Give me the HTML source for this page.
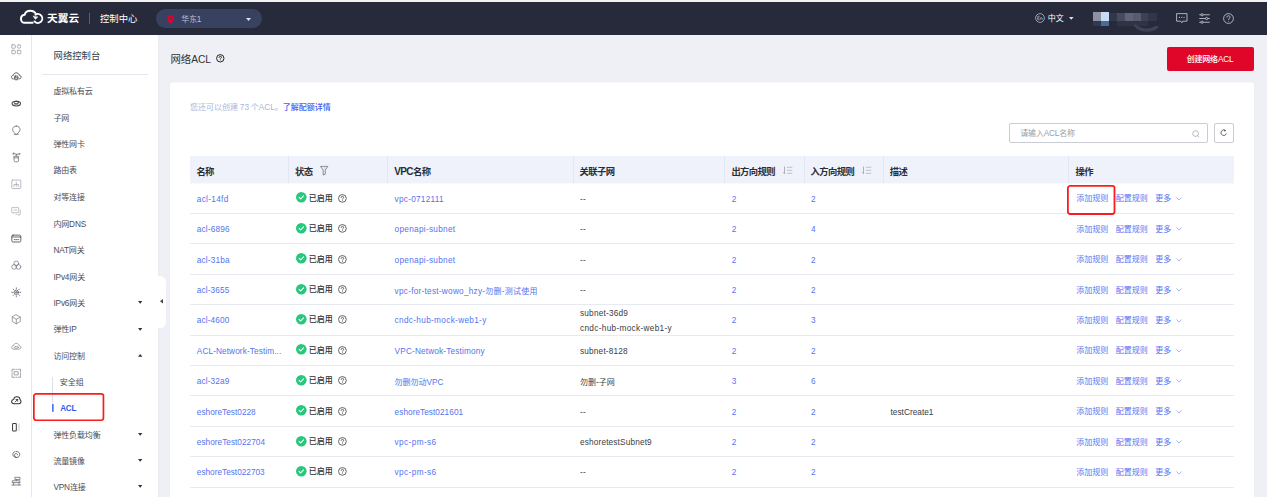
<!DOCTYPE html>
<html lang="zh"><head><meta charset="utf-8"><title>网络ACL</title>
<style>
html,body{margin:0;padding:0}
body{width:1267px;height:497px;overflow:hidden;position:relative;background:#eff0f5;font-family:"Liberation Sans","Noto Sans CJK SC",sans-serif}
body>div,body>svg{position:absolute}
svg{overflow:visible}
.cj{font-family:"Liberation Sans","Noto Sans CJK SC",sans-serif}
.cb{font-weight:bold}
.cm{font-weight:500}
</style></head><body>
<div style="left:0.00px;top:0.00px;width:1267.00px;height:2.00px;background:#f2f2f3"></div>
<div style="left:0.00px;top:2.00px;width:1267.00px;height:32.70px;background:#272a3a"></div>
<svg style="left:0;top:0;width:100px;height:35px" viewBox="0 0 100 35" fill="none" stroke="#fff" stroke-width="2" stroke-linecap="round" stroke-linejoin="round">
<path d="M32.6 22.8H24.6C22.4 22.8 21 21 21 18.9C21 16.700 22.500 15 24.700 14.800C25.200 12.400 27.400 10.800 30.200 10.800C32.900 10.800 35 12.100 36 14.100"/>
<path d="M35.500 14.600A4.500 4.500 0 1 1 34.400 21.400" stroke-width="1.9"/>
<path d="M33.300 16.300L35.300 19.300L37.600 17.200Z" fill="#fff" stroke-width="0.6"/>
</svg>
<div style="left:47.00px;top:11.25px;height:14px;line-height:14px;font-size:10.70px;color:#fff;white-space:nowrap;"><span class="cj cb">天翼云</span></div>
<div style="left:89.00px;top:13.20px;width:0.90px;height:10.70px;background:#5a5e70"></div>
<div style="left:100.00px;top:12.45px;height:14px;line-height:14px;font-size:9.33px;color:#fff;white-space:nowrap;"><span class="cj">控制中心</span></div>
<div style="left:156.40px;top:8.70px;width:105.60px;height:19.50px;background:#384260;border-radius:10px"></div>
<svg style="left:166.8px;top:14.6px;width:7px;height:8.8px" viewBox="0 0 14 17.6"><path d="M7 0.3C3.3 0.3 0.5 3.1 0.5 6.7C0.5 10.6 4.2 14.2 7 17.3C9.8 14.2 13.5 10.6 13.5 6.7C13.5 3.1 10.7 0.3 7 0.3Z" fill="#e60028"/><circle cx="7" cy="6.6" r="2.5" fill="#384260"/></svg>
<div style="left:181.30px;top:13.25px;height:14px;line-height:14px;font-size:7.90px;color:#b9bfd2;white-space:nowrap;"><span class="cj">华东</span><span style="margin-left:-0.4px;font-size:8.25px">1</span></div>
<svg style="left:245.8px;top:17.6px;width:5px;height:3px" viewBox="0 0 10 6"><path d="M0 0H10L5 6Z" fill="#dfe2ee"/></svg>
<svg style="left:1035px;top:13.2px;width:10px;height:10px" viewBox="0 0 20 20" fill="none" stroke="#c9ccd8" stroke-width="1.4"><circle cx="10" cy="10" r="8.8"/><path d="M5.5 6.5H9.5M5.5 10H9M5.5 13.5H9.5M5.5 6.5V13.5M11.5 13.5V9M11.5 10.5C12 9.3 14.5 8.8 14.5 10.8V13.5" stroke-width="1.2"/></svg>
<div style="left:1047.70px;top:11.56px;height:14px;line-height:14px;font-size:8.00px;color:#fff;white-space:nowrap;"><span class="cj">中文</span></div>
<svg style="left:1068.6px;top:16.6px;width:4.6px;height:2.8px" viewBox="0 0 10 6"><path d="M0 0H10L5 6Z" fill="#dfe2ee"/></svg>
<div style="left:1093.00px;top:12.00px;width:8.50px;height:9.50px;background:#8d91a1"></div>
<div style="left:1101.00px;top:12.00px;width:8.00px;height:9.50px;background:#c6dbf4"></div>
<div style="left:1093.00px;top:21.40px;width:8.50px;height:4.60px;background:#2e3a53"></div>
<div style="left:1101.00px;top:21.40px;width:8.00px;height:4.60px;background:#4c6b94"></div>
<div style="left:1108.70px;top:12.70px;width:9.30px;height:8.10px;background:#33374a"></div>
<div style="left:1117.00px;top:12.70px;width:8.80px;height:8.10px;background:#484b5e"></div>
<div style="left:1124.80px;top:12.70px;width:8.80px;height:8.10px;background:#626579"></div>
<div style="left:1132.60px;top:12.70px;width:8.90px;height:8.10px;background:#595c6f"></div>
<div style="left:1140.50px;top:12.70px;width:8.80px;height:8.10px;background:#3e4153"></div>
<div style="left:1148.30px;top:12.70px;width:8.70px;height:8.10px;background:#33364a"></div>
<div style="left:1117.00px;top:20.80px;width:31.00px;height:5.60px;background:#2f3345"></div>
<svg style="left:1130px;top:24px;width:32px;height:9px" viewBox="0 0 32 9"><path d="M5 1.500C9 5.500 18 8 27 3C23 7 11 8.500 5 1.500Z" fill="#3f4255" stroke="#3f4255" stroke-width="2.600" stroke-linejoin="round"/></svg>
<svg style="left:1175.6px;top:12.8px;width:11.6px;height:10.8px" viewBox="0 0 23 21.4" fill="none" stroke="#d9dbe4" stroke-width="1.5"><path d="M1.2 1.2H21.8V16.2H13.5L11.5 19.5L9.5 16.2H1.2Z" stroke-linejoin="round"/><path d="M6 8.7H8M10.5 8.7H12.5M15 8.7H17" stroke-width="1.8"/></svg>
<svg style="left:1199.4px;top:13px;width:11px;height:11px" viewBox="0 0 22 22" fill="none" stroke="#d9dbe4" stroke-width="1.5"><path d="M0.5 3.5H4M8.5 3.5H21.5M0.5 11H13M17.5 11H21.5M0.5 18.5H4M8.5 18.5H21.5"/><circle cx="6.2" cy="3.5" r="2.2"/><circle cx="15.2" cy="11" r="2.2"/><circle cx="6.2" cy="18.5" r="2.2"/></svg>
<svg style="left:1223.2px;top:13.1px;width:11px;height:11px" viewBox="0 0 22 22" fill="none" stroke="#d9dbe4" stroke-width="1.5"><circle cx="11" cy="11" r="9.8"/><path d="M7.8 8.6C7.8 6.6 9.2 5.5 11 5.5C12.9 5.5 14.2 6.7 14.2 8.3C14.2 10.6 11 10.6 11 13.2" stroke-linecap="round"/><circle cx="11" cy="16.3" r="0.9" fill="#d9dbe4" stroke="none"/></svg>
<div style="left:0.00px;top:34.70px;width:31.30px;height:462.30px;background:#fff;border-right:0.8px solid #e3e6f0"></div>
<div style="left:32.00px;top:34.70px;width:126.20px;height:462.30px;background:#fff"></div>
<div style="left:158.20px;top:34.70px;width:3.00px;height:462.30px;background:linear-gradient(90deg,#e9ebf1,#f0f1f6)"></div>
<div style="left:158.00px;top:275.50px;width:7.80px;height:52.50px;background:#fff;border-radius:0 6px 6px 0"></div>
<svg style="left:160.2px;top:299px;width:3px;height:4.6px" viewBox="0 0 6 9"><path d="M6 0V9L0 4.5Z" fill="#444"/></svg>
<svg style="left:10.9px;top:43.60px;width:10.6px;height:10.6px" viewBox="0 0 20 20" fill="none" stroke="#9a9da8" stroke-width="1.5" stroke-linejoin="round" stroke-linecap="round"><rect x="1.5" y="1.5" width="6.5" height="6.5" rx="0.8"/><rect x="12" y="1.5" width="6.5" height="6.5" rx="3"/><rect x="1.5" y="12" width="6.5" height="6.5" rx="0.8"/><rect x="12" y="12" width="6.5" height="6.5" rx="0.8"/></svg>
<svg style="left:10.9px;top:70.65px;width:10.6px;height:10.6px" viewBox="0 0 20 20" fill="none" stroke="#33363f" stroke-width="1.5" stroke-linejoin="round" stroke-linecap="round"><path d="M4.5 15H3.5C1.5 14.5 0.8 12.5 1 11C1.3 9 3 8 4.5 8C5 5 7.5 3.5 10 3.5C12.5 3.5 15 5 15.5 8C17.5 8 19 9.5 19 11.5C19 13.5 17.5 15 15.5 15"/><rect x="7" y="9.5" width="6" height="7" rx="1"/><path d="M7 13H13"/></svg>
<svg style="left:10.9px;top:97.70px;width:10.6px;height:10.6px" viewBox="0 0 20 20" fill="none" stroke="#3d4049" stroke-width="1.5" stroke-linejoin="round" stroke-linecap="round"><ellipse cx="10" cy="10.5" rx="8" ry="4.4" stroke-width="1.9"/><ellipse cx="10" cy="8.6" rx="4" ry="2.8"/><path d="M6.5 11.2H13.5"/></svg>
<svg style="left:10.9px;top:124.75px;width:10.6px;height:10.6px" viewBox="0 0 20 20" fill="none" stroke="#6a6d78" stroke-width="1.5" stroke-linejoin="round" stroke-linecap="round"><path d="M10 2C14.5 2 17 5.2 17 8.5C17 12.5 14 14.5 10 18C6 14.5 3 12.5 3 8.5C3 5.2 5.5 2 10 2Z"/><path d="M6 17.5H14"/></svg>
<svg style="left:10.9px;top:151.80px;width:10.6px;height:10.6px" viewBox="0 0 20 20" fill="none" stroke="#6f727b" stroke-width="1.5" stroke-linejoin="round" stroke-linecap="round"><path d="M6 8H14V17C14 18 13 18.5 12 18.5H8C7 18.5 6 18 6 17Z"/><path d="M6 11H14M10 8V4.5M10 4.5L5 2M10 4.5L15 3.5M3.5 3L5 2L4.5 4.5M15 3.5L17 2.5L16.5 5"/></svg>
<svg style="left:10.9px;top:178.85px;width:10.6px;height:10.6px" viewBox="0 0 20 20" fill="none" stroke="#a9acb6" stroke-width="1.5" stroke-linejoin="round" stroke-linecap="round"><rect x="1.5" y="2" width="17" height="16" rx="1.5"/><path d="M10 6V14M5.5 14V10.5H14.5V14"/></svg>
<svg style="left:10.9px;top:205.90px;width:10.6px;height:10.6px" viewBox="0 0 20 20" fill="none" stroke="#b3b6bf" stroke-width="1.5" stroke-linejoin="round" stroke-linecap="round"><path d="M2 3H14.5V12H7L4.5 14.5V12H2Z"/><path d="M17.5 7.5V15.5H15.5V18L12.5 15.5H9"/><path d="M5.5 7.5H11"/></svg>
<svg style="left:10.9px;top:232.95px;width:10.6px;height:10.6px" viewBox="0 0 20 20" fill="none" stroke="#3d4049" stroke-width="1.5" stroke-linejoin="round" stroke-linecap="round"><rect x="1.5" y="4" width="17" height="13" rx="2.5"/><path d="M1.5 7.5H18.5"/><path d="M6 12.5H7.5M9.5 12.5H11M13 12.5H14.5"/></svg>
<svg style="left:10.9px;top:260.00px;width:10.6px;height:10.6px" viewBox="0 0 20 20" fill="none" stroke="#80838d" stroke-width="1.5" stroke-linejoin="round" stroke-linecap="round"><circle cx="10" cy="6.5" r="4.5"/><circle cx="6" cy="13" r="4.5"/><circle cx="14" cy="13" r="4.5"/></svg>
<svg style="left:10.9px;top:287.05px;width:10.6px;height:10.6px" viewBox="0 0 20 20" fill="none" stroke="#5a5d68" stroke-width="1.5" stroke-linejoin="round" stroke-linecap="round"><circle cx="10" cy="10" r="4.2"/><circle cx="10" cy="10" r="1.6"/><path d="M10 1.5V3.5M10 16.5V18.5M1.5 10H3.5M16.5 10H18.5M4 4L5.3 5.3M14.7 14.7L16 16M4 16L5.3 14.7M14.7 5.3L16 4"/></svg>
<svg style="left:10.9px;top:314.10px;width:10.6px;height:10.6px" viewBox="0 0 20 20" fill="none" stroke="#85888f" stroke-width="1.5" stroke-linejoin="round" stroke-linecap="round"><path d="M10 1.5L17.5 5.8V14.2L10 18.5L2.5 14.2V5.8Z"/><path d="M2.5 5.8L10 10L17.5 5.8M10 10V18.5"/></svg>
<svg style="left:10.9px;top:341.15px;width:10.6px;height:10.6px" viewBox="0 0 20 20" fill="none" stroke="#8a8d97" stroke-width="1.5" stroke-linejoin="round" stroke-linecap="round"><path d="M5 15.5C2.5 15.5 1.2 13.8 1.2 12C1.2 10 2.8 8.7 4.8 8.7C5.3 6 7.5 4.5 10 4.5C12.5 4.5 14.7 6 15.2 8.7C17.2 8.7 18.8 10 18.8 12C18.8 13.8 17.5 15.5 15 15.5Z"/><ellipse cx="10" cy="12" rx="4" ry="1.8"/></svg>
<svg style="left:10.9px;top:368.20px;width:10.6px;height:10.6px" viewBox="0 0 20 20" fill="none" stroke="#8a8d97" stroke-width="1.5" stroke-linejoin="round" stroke-linecap="round"><path d="M2 7V2.5H7M9.5 2.5H11M13.5 2.5H18V7M18 9.5V11M18 13V17.5H13.5M11 17.5H9.5M7 17.5H2V13M2 11V9.5"/><rect x="6.5" y="7" width="7" height="6"/></svg>
<svg style="left:10.9px;top:395.25px;width:10.6px;height:10.6px" viewBox="0 0 20 20" fill="none" stroke="#2f323a" stroke-width="1.5" stroke-linejoin="round" stroke-linecap="round"><path d="M5.5 16.5C3 16.5 1.2 14.6 1.2 12.4C1.2 10.2 2.9 8.6 5 8.5C5.6 5.5 8 3.5 11 3.5C14.5 3.5 17 6 17.2 9C18.3 9.6 18.8 10.8 18.8 12.3C18.8 14.6 17 16.5 14.5 16.5Z" stroke-width="1.9"/><path d="M8 13L12.5 8.5M12.5 8.5V11.5M12.5 8.5H9.5" stroke-width="1.6"/></svg>
<svg style="left:10.9px;top:422.30px;width:10.6px;height:10.6px" viewBox="0 0 20 20" fill="none" stroke="#3a3d46" stroke-width="1.5" stroke-linejoin="round" stroke-linecap="round"><rect x="3" y="3" width="7" height="14" rx="1.5" stroke-width="1.9"/><path d="M15 4V16" stroke="#bbb"/></svg>
<svg style="left:10.9px;top:449.35px;width:10.6px;height:10.6px" viewBox="0 0 20 20" fill="none" stroke="#4a4d57" stroke-width="1.5" stroke-linejoin="round" stroke-linecap="round"><path d="M10 4.5C13.5 4.5 16.5 7 16.5 10.5C16.5 13.5 14 16 11 16C8.5 16 6.5 14 6.5 11.8C6.5 10 8 8.6 9.8 8.6C11.3 8.6 12.4 9.7 12.4 11"/><path d="M10 16C6.5 16 3.5 13.5 3.5 10C3.5 7.5 5 5.5 7.5 4.8"/></svg>
<svg style="left:10.9px;top:476.40px;width:10.6px;height:10.6px" viewBox="0 0 20 20" fill="none" stroke="#6a6d77" stroke-width="1.5" stroke-linejoin="round" stroke-linecap="round"><rect x="8" y="2.500" width="9" height="4"/><rect x="3" y="9" width="14" height="3.500"/><path d="M1.500 17H18.500M5 12.500V17M15 12.500V17M10 6.500V9"/></svg>
<div style="left:53.60px;top:49.25px;height:14px;line-height:14px;font-size:9.33px;color:#3a3d44;white-space:nowrap;"><span class="cj">网络控制台</span></div>
<div style="left:42.40px;top:74.00px;width:105.60px;height:0.80px;background:#e4e6ee"></div>
<div style="left:53.40px;top:85.36px;height:14px;line-height:14px;font-size:8.00px;color:#4a4d55;white-space:nowrap;letter-spacing:-0.15px"><span class="cj">虚拟私有云</span></div>
<div style="left:53.40px;top:111.76px;height:14px;line-height:14px;font-size:8.00px;color:#4a4d55;white-space:nowrap;letter-spacing:-0.15px"><span class="cj">子网</span></div>
<div style="left:53.40px;top:138.36px;height:14px;line-height:14px;font-size:8.00px;color:#4a4d55;white-space:nowrap;letter-spacing:-0.15px"><span class="cj">弹性网卡</span></div>
<div style="left:53.40px;top:164.26px;height:14px;line-height:14px;font-size:8.00px;color:#4a4d55;white-space:nowrap;letter-spacing:-0.15px"><span class="cj">路由表</span></div>
<div style="left:53.40px;top:191.26px;height:14px;line-height:14px;font-size:8.00px;color:#4a4d55;white-space:nowrap;letter-spacing:-0.15px"><span class="cj">对等连接</span></div>
<div style="left:53.40px;top:217.76px;height:14px;line-height:14px;font-size:8.00px;color:#4a4d55;white-space:nowrap;letter-spacing:-0.15px"><span class="cj">内网</span><span style="font-size:8.25px">DNS</span></div>
<div style="left:53.40px;top:244.16px;height:14px;line-height:14px;font-size:8.00px;color:#4a4d55;white-space:nowrap;letter-spacing:-0.15px"><span style="font-size:8.25px">NAT</span><span class="cj">网关</span></div>
<div style="left:53.40px;top:270.66px;height:14px;line-height:14px;font-size:8.00px;color:#4a4d55;white-space:nowrap;letter-spacing:-0.15px"><span style="font-size:8.25px">IPv4</span><span class="cj">网关</span></div>
<div style="left:53.40px;top:297.06px;height:14px;line-height:14px;font-size:8.00px;color:#4a4d55;white-space:nowrap;letter-spacing:-0.15px"><span style="font-size:8.25px">IPv6</span><span class="cj">网关</span></div>
<svg style="left:138.4px;top:301.40px;width:4.4px;height:2.8px" viewBox="0 0 10 6"><path d="M0 0H10L5 6Z" fill="#333"/></svg>
<div style="left:53.40px;top:323.46px;height:14px;line-height:14px;font-size:8.00px;color:#4a4d55;white-space:nowrap;letter-spacing:-0.15px"><span class="cj">弹性</span><span style="font-size:8.25px">IP</span></div>
<svg style="left:138.4px;top:327.80px;width:4.4px;height:2.8px" viewBox="0 0 10 6"><path d="M0 0H10L5 6Z" fill="#333"/></svg>
<div style="left:53.40px;top:349.96px;height:14px;line-height:14px;font-size:8.00px;color:#4a4d55;white-space:nowrap;letter-spacing:-0.15px"><span class="cj">访问控制</span></div>
<svg style="left:138.4px;top:354.30px;width:4.4px;height:2.8px" viewBox="0 0 10 6"><path d="M0 6H10L5 0Z" fill="#333"/></svg>
<div style="left:53.40px;top:428.86px;height:14px;line-height:14px;font-size:8.00px;color:#4a4d55;white-space:nowrap;letter-spacing:-0.15px"><span class="cj">弹性负载均衡</span></div>
<svg style="left:138.4px;top:433.20px;width:4.4px;height:2.8px" viewBox="0 0 10 6"><path d="M0 0H10L5 6Z" fill="#333"/></svg>
<div style="left:53.40px;top:454.76px;height:14px;line-height:14px;font-size:8.00px;color:#4a4d55;white-space:nowrap;letter-spacing:-0.15px"><span class="cj">流量镜像</span></div>
<svg style="left:138.4px;top:459.10px;width:4.4px;height:2.8px" viewBox="0 0 10 6"><path d="M0 0H10L5 6Z" fill="#333"/></svg>
<div style="left:53.40px;top:481.06px;height:14px;line-height:14px;font-size:8.00px;color:#4a4d55;white-space:nowrap;letter-spacing:-0.15px"><span style="font-size:8.25px">VPN</span><span class="cj">连接</span></div>
<svg style="left:138.4px;top:485.40px;width:4.4px;height:2.8px" viewBox="0 0 10 6"><path d="M0 0H10L5 6Z" fill="#333"/></svg>
<svg style="left:50px;top:377px;width:6px;height:36px" viewBox="0 0 6 36"><rect x="2.1" y="0" width="0.8" height="27.2" fill="#d5d8e2"/><rect x="2.1" y="27.100" width="1.500" height="7.700" fill="#3b63f3"/></svg>
<div style="left:59.80px;top:375.96px;height:14px;line-height:14px;font-size:8.00px;color:#4a4d55;white-space:nowrap;"><span class="cj">安全组</span></div>
<div style="left:60.30px;top:401.80px;height:14px;line-height:14px;font-size:8.20px;color:#2f5cf0;white-space:nowrap;font-weight:bold;letter-spacing:-0.35px">ACL</div>
<svg style="left:33.00px;top:393.00px;width:71.30px;height:28.10px" viewBox="0 0 71.30 28.10"><rect x="0.85" y="0.85" width="69.60" height="26.40" rx="2.2" fill="none" stroke="#fa1c1c" stroke-width="1.70"/></svg>
<div style="left:170.40px;top:52.63px;height:14px;line-height:14px;font-size:10.40px;color:#333;white-space:nowrap;"><span class="cj">网络</span><span style="font-size:10.3px;letter-spacing:-0.1px">ACL</span></div>
<svg style="left:215.5px;top:54.4px;width:8.6px;height:8.6px" viewBox="0 0 20 20" fill="none" stroke="#222" stroke-width="2.3"><circle cx="10" cy="10" r="8.6"/><path d="M7.2 8C7.2 6.300 8.400 5.300 10 5.300C11.700 5.300 12.800 6.400 12.800 7.800C12.800 9.800 10 9.800 10 12" stroke-linecap="round"/><circle cx="10" cy="14.600" r="0.900" fill="#333" stroke="none"/></svg>
<div style="left:1166.70px;top:47.40px;width:87.20px;height:23.20px;background:#df0629;border-radius:2px"></div>
<div style="left:1186.70px;top:52.66px;height:14px;line-height:14px;font-size:8.00px;color:#fff;white-space:nowrap;letter-spacing:-0.2px"><span class="cj cm">创建网络</span><span style="font-size:8.25px">ACL</span></div>
<div style="left:170.00px;top:82.00px;width:1084.00px;height:4.00px;background:#f8f8fb;border-radius:3px 3px 0 0"></div>
<div style="left:170.00px;top:83.00px;width:1084.00px;height:420.00px;background:#fff;border-radius:3px"></div>
<div style="left:190.00px;top:101.06px;height:14px;line-height:14px;font-size:8.00px;color:#a9b6dc;white-space:nowrap;word-spacing:-0.5px"><span class="cj">您还可以创建</span><span style="font-size:8.25px"> 73 </span><span class="cj">个</span><span style="font-size:8.25px">ACL</span><span class="cj">。</span><span style="color:#3f5ff5"><span class="cj cm">了解配额详情</span></span></div>
<div style="left:1009.40px;top:123.40px;width:198.30px;height:19.20px;border:0.8px solid #c9ccd3;border-radius:2px;box-sizing:border-box;background:#fff"></div>
<div style="left:1020.30px;top:127.06px;height:14px;line-height:14px;font-size:8.00px;color:#9a9da6;white-space:nowrap;letter-spacing:-0.2px"><span class="cj">请输入</span><span style="font-size:8.25px">ACL</span><span class="cj">名称</span></div>
<svg style="left:1191.8px;top:129.6px;width:7.6px;height:7.6px" viewBox="0 0 16 16" fill="none" stroke="#8c8f98" stroke-width="1.3"><circle cx="7.5" cy="7.5" r="6"/><path d="M12 12L14.5 14.5" stroke-linecap="round"/></svg>
<div style="left:1214.40px;top:123.40px;width:19.30px;height:19.20px;border:0.8px solid #c9ccd3;border-radius:2px;box-sizing:border-box;background:#fff"></div>
<svg style="left:1220.4px;top:129.4px;width:7.4px;height:7.4px" viewBox="0 0 16 16" fill="none" stroke="#444" stroke-width="1.8"><path d="M13.500 9.500A5.800 5.800 0 1 1 11.500 3.400"/><path d="M9.500 0.800L13 3.600L9.800 6" fill="#444" stroke="none"/></svg>
<div style="left:190.00px;top:156.00px;width:1043.70px;height:27.00px;background:#eff2fb"></div>
<div style="left:190.00px;top:183.00px;width:1043.70px;height:1.00px;background:#f8f9fe"></div>
<div style="left:288.00px;top:156.10px;width:0.80px;height:27.00px;background:#e3e7f3"></div>
<div style="left:387.10px;top:156.10px;width:0.80px;height:27.00px;background:#e3e7f3"></div>
<div style="left:573.20px;top:156.10px;width:0.80px;height:27.00px;background:#e3e7f3"></div>
<div style="left:724.40px;top:156.10px;width:0.80px;height:27.00px;background:#e3e7f3"></div>
<div style="left:803.60px;top:156.10px;width:0.80px;height:27.00px;background:#e3e7f3"></div>
<div style="left:883.00px;top:156.10px;width:0.80px;height:27.00px;background:#e3e7f3"></div>
<div style="left:1068.20px;top:156.10px;width:0.80px;height:27.00px;background:#e3e7f3"></div>
<div style="left:196.40px;top:164.55px;height:14px;line-height:14px;font-size:9.30px;color:#2b2d33;white-space:nowrap;font-weight:bold;letter-spacing:-0.6px"><span class="cj">名称</span></div>
<div style="left:295.00px;top:164.55px;height:14px;line-height:14px;font-size:9.30px;color:#2b2d33;white-space:nowrap;font-weight:bold;letter-spacing:-0.6px"><span class="cj">状态</span></div>
<div style="left:394.20px;top:164.55px;height:14px;line-height:14px;font-size:9.30px;color:#2b2d33;white-space:nowrap;font-weight:bold;letter-spacing:-0.6px"><span style="font-size:10.00px">VPC</span><span class="cj">名称</span></div>
<div style="left:579.60px;top:164.55px;height:14px;line-height:14px;font-size:9.30px;color:#2b2d33;white-space:nowrap;font-weight:bold;letter-spacing:-0.6px"><span class="cj">关联子网</span></div>
<div style="left:731.40px;top:164.55px;height:14px;line-height:14px;font-size:9.30px;color:#2b2d33;white-space:nowrap;font-weight:bold;letter-spacing:-0.6px"><span class="cj">出方向规则</span></div>
<div style="left:810.60px;top:164.55px;height:14px;line-height:14px;font-size:9.30px;color:#2b2d33;white-space:nowrap;font-weight:bold;letter-spacing:-0.6px"><span class="cj">入方向规则</span></div>
<div style="left:889.80px;top:164.55px;height:14px;line-height:14px;font-size:9.30px;color:#2b2d33;white-space:nowrap;font-weight:bold;letter-spacing:-0.6px"><span class="cj">描述</span></div>
<div style="left:1075.60px;top:164.55px;height:14px;line-height:14px;font-size:9.30px;color:#2b2d33;white-space:nowrap;font-weight:bold;letter-spacing:-0.6px"><span class="cj">操作</span></div>
<svg style="left:319.9px;top:165.5px;width:8.4px;height:9.6px" viewBox="0 0 14 19" preserveAspectRatio="none" fill="#e4e6ef" stroke="#6b6e78" stroke-width="1.3" stroke-linejoin="round"><path d="M0.8 0.8H13.2L8.8 8V16.2L5.2 18V8Z"/></svg>
<svg style="left:783.2px;top:166px;width:9.600px;height:8.600px" viewBox="0 0 19 17" fill="none" stroke="#8a8d97" stroke-width="1.3"><path d="M3 1V15M0.800 12.500L3 15.500"/><path d="M7.500 2.500H18.500M7.500 8.500H18.500M7.500 14.500H18.500" stroke="#a5a8b2"/></svg>
<svg style="left:862.4px;top:166px;width:9.600px;height:8.600px" viewBox="0 0 19 17" fill="none" stroke="#8a8d97" stroke-width="1.3"><path d="M3 1V15M0.800 12.500L3 15.500"/><path d="M7.500 2.500H18.500M7.500 8.500H18.500M7.500 14.500H18.500" stroke="#a5a8b2"/></svg>
<div style="left:190.00px;top:213.00px;width:1043.70px;height:0.90px;background:#e8eaf2"></div>
<div style="left:196.80px;top:192.80px;height:14px;line-height:14px;font-size:8.00px;color:#5473f1;white-space:nowrap;letter-spacing:0.306px;"><span style="font-size:8.25px">acl-14fd</span></div>
<svg style="left:295.900px;top:192.40px;width:10.600px;height:10.600px" viewBox="0 0 20 20"><circle cx="10" cy="10" r="10" fill="#27c77d"/><path d="M5.800 10.200L8.800 13.200L14.200 7.400" fill="none" stroke="#fff" stroke-width="2" stroke-linecap="round" stroke-linejoin="round"/></svg>
<div style="left:308.80px;top:191.86px;height:14px;line-height:14px;font-size:8.00px;color:#2e3035;white-space:nowrap;"><span class="cj cm">已启用</span></div>
<svg style="left:338.1px;top:193.80px;width:8.800px;height:8.800px" viewBox="0 0 20 20" fill="none" stroke="#333" stroke-width="1.7"><circle cx="10" cy="10" r="8.800"/><path d="M7.200 8C7.200 6.300 8.400 5.300 10 5.300C11.700 5.300 12.800 6.400 12.800 7.800C12.800 9.800 10 9.800 10 12" stroke-linecap="round"/><circle cx="10" cy="14.800" r="0.900" fill="#333" stroke="none"/></svg>
<div style="left:394.60px;top:192.80px;height:14px;line-height:14px;font-size:8.00px;color:#5473f1;white-space:nowrap;letter-spacing:0.241px;"><span style="font-size:8.25px">vpc-0712111</span></div>
<div style="left:580.00px;top:192.80px;height:14px;line-height:14px;font-size:8.00px;color:#3a3c42;white-space:nowrap;letter-spacing:0.25px;"><span style="font-size:8.25px">--</span></div>
<div style="left:731.80px;top:192.80px;height:14px;line-height:14px;font-size:8.25px;color:#5473f1;white-space:nowrap;">2</div>
<div style="left:811.00px;top:192.80px;height:14px;line-height:14px;font-size:8.25px;color:#5473f1;white-space:nowrap;">2</div>
<div style="left:1076.20px;top:192.36px;height:14px;line-height:14px;font-size:8.00px;color:#5a76f2;white-space:nowrap;"><span class="cj">添加规则</span></div>
<div style="left:1115.80px;top:192.36px;height:14px;line-height:14px;font-size:8.00px;color:#5a76f2;white-space:nowrap;"><span class="cj">配置规则</span></div>
<div style="left:1155.20px;top:192.36px;height:14px;line-height:14px;font-size:8.00px;color:#5a76f2;white-space:nowrap;"><span class="cj">更多</span></div>
<svg style="left:1175.6px;top:197.00px;width:6px;height:3.600px" viewBox="0 0 12 7" fill="none" stroke="#7c93f2" stroke-width="1.3"><path d="M0.800 0.800L6 6L11.200 0.800"/></svg>
<div style="left:190.00px;top:243.40px;width:1043.70px;height:0.90px;background:#e8eaf2"></div>
<div style="left:196.80px;top:223.20px;height:14px;line-height:14px;font-size:8.00px;color:#5473f1;white-space:nowrap;letter-spacing:0.151px;"><span style="font-size:8.25px">acl-6896</span></div>
<svg style="left:295.900px;top:222.80px;width:10.600px;height:10.600px" viewBox="0 0 20 20"><circle cx="10" cy="10" r="10" fill="#27c77d"/><path d="M5.800 10.200L8.800 13.200L14.200 7.400" fill="none" stroke="#fff" stroke-width="2" stroke-linecap="round" stroke-linejoin="round"/></svg>
<div style="left:308.80px;top:222.26px;height:14px;line-height:14px;font-size:8.00px;color:#2e3035;white-space:nowrap;"><span class="cj cm">已启用</span></div>
<svg style="left:338.1px;top:224.20px;width:8.800px;height:8.800px" viewBox="0 0 20 20" fill="none" stroke="#333" stroke-width="1.7"><circle cx="10" cy="10" r="8.800"/><path d="M7.200 8C7.200 6.300 8.400 5.300 10 5.300C11.700 5.300 12.800 6.400 12.800 7.800C12.800 9.800 10 9.800 10 12" stroke-linecap="round"/><circle cx="10" cy="14.800" r="0.900" fill="#333" stroke="none"/></svg>
<div style="left:394.60px;top:223.20px;height:14px;line-height:14px;font-size:8.00px;color:#5473f1;white-space:nowrap;letter-spacing:0.278px;"><span style="font-size:8.25px">openapi-subnet</span></div>
<div style="left:580.00px;top:223.20px;height:14px;line-height:14px;font-size:8.00px;color:#3a3c42;white-space:nowrap;letter-spacing:0.25px;"><span style="font-size:8.25px">--</span></div>
<div style="left:731.80px;top:223.20px;height:14px;line-height:14px;font-size:8.25px;color:#5473f1;white-space:nowrap;">2</div>
<div style="left:811.00px;top:223.20px;height:14px;line-height:14px;font-size:8.25px;color:#5473f1;white-space:nowrap;">4</div>
<div style="left:1076.20px;top:222.76px;height:14px;line-height:14px;font-size:8.00px;color:#5a76f2;white-space:nowrap;"><span class="cj">添加规则</span></div>
<div style="left:1115.80px;top:222.76px;height:14px;line-height:14px;font-size:8.00px;color:#5a76f2;white-space:nowrap;"><span class="cj">配置规则</span></div>
<div style="left:1155.20px;top:222.76px;height:14px;line-height:14px;font-size:8.00px;color:#5a76f2;white-space:nowrap;"><span class="cj">更多</span></div>
<svg style="left:1175.6px;top:227.40px;width:6px;height:3.600px" viewBox="0 0 12 7" fill="none" stroke="#7c93f2" stroke-width="1.3"><path d="M0.800 0.800L6 6L11.200 0.800"/></svg>
<div style="left:190.00px;top:273.80px;width:1043.70px;height:0.90px;background:#e8eaf2"></div>
<div style="left:196.80px;top:253.60px;height:14px;line-height:14px;font-size:8.00px;color:#5473f1;white-space:nowrap;letter-spacing:0.151px;"><span style="font-size:8.25px">acl-31ba</span></div>
<svg style="left:295.900px;top:253.20px;width:10.600px;height:10.600px" viewBox="0 0 20 20"><circle cx="10" cy="10" r="10" fill="#27c77d"/><path d="M5.800 10.200L8.800 13.200L14.200 7.400" fill="none" stroke="#fff" stroke-width="2" stroke-linecap="round" stroke-linejoin="round"/></svg>
<div style="left:308.80px;top:252.66px;height:14px;line-height:14px;font-size:8.00px;color:#2e3035;white-space:nowrap;"><span class="cj cm">已启用</span></div>
<svg style="left:338.1px;top:254.60px;width:8.800px;height:8.800px" viewBox="0 0 20 20" fill="none" stroke="#333" stroke-width="1.7"><circle cx="10" cy="10" r="8.800"/><path d="M7.200 8C7.200 6.300 8.400 5.300 10 5.300C11.700 5.300 12.800 6.400 12.800 7.800C12.800 9.800 10 9.800 10 12" stroke-linecap="round"/><circle cx="10" cy="14.800" r="0.900" fill="#333" stroke="none"/></svg>
<div style="left:394.60px;top:253.60px;height:14px;line-height:14px;font-size:8.00px;color:#5473f1;white-space:nowrap;letter-spacing:0.278px;"><span style="font-size:8.25px">openapi-subnet</span></div>
<div style="left:580.00px;top:253.60px;height:14px;line-height:14px;font-size:8.00px;color:#3a3c42;white-space:nowrap;letter-spacing:0.25px;"><span style="font-size:8.25px">--</span></div>
<div style="left:731.80px;top:253.60px;height:14px;line-height:14px;font-size:8.25px;color:#5473f1;white-space:nowrap;">2</div>
<div style="left:811.00px;top:253.60px;height:14px;line-height:14px;font-size:8.25px;color:#5473f1;white-space:nowrap;">2</div>
<div style="left:1076.20px;top:253.16px;height:14px;line-height:14px;font-size:8.00px;color:#5a76f2;white-space:nowrap;"><span class="cj">添加规则</span></div>
<div style="left:1115.80px;top:253.16px;height:14px;line-height:14px;font-size:8.00px;color:#5a76f2;white-space:nowrap;"><span class="cj">配置规则</span></div>
<div style="left:1155.20px;top:253.16px;height:14px;line-height:14px;font-size:8.00px;color:#5a76f2;white-space:nowrap;"><span class="cj">更多</span></div>
<svg style="left:1175.6px;top:257.80px;width:6px;height:3.600px" viewBox="0 0 12 7" fill="none" stroke="#7c93f2" stroke-width="1.3"><path d="M0.800 0.800L6 6L11.200 0.800"/></svg>
<div style="left:190.00px;top:304.20px;width:1043.70px;height:0.90px;background:#e8eaf2"></div>
<div style="left:196.80px;top:284.00px;height:14px;line-height:14px;font-size:8.00px;color:#5473f1;white-space:nowrap;letter-spacing:0.122px;"><span style="font-size:8.25px">acl-3655</span></div>
<svg style="left:295.900px;top:283.60px;width:10.600px;height:10.600px" viewBox="0 0 20 20"><circle cx="10" cy="10" r="10" fill="#27c77d"/><path d="M5.800 10.200L8.800 13.200L14.200 7.400" fill="none" stroke="#fff" stroke-width="2" stroke-linecap="round" stroke-linejoin="round"/></svg>
<div style="left:308.80px;top:283.06px;height:14px;line-height:14px;font-size:8.00px;color:#2e3035;white-space:nowrap;"><span class="cj cm">已启用</span></div>
<svg style="left:338.1px;top:285.00px;width:8.800px;height:8.800px" viewBox="0 0 20 20" fill="none" stroke="#333" stroke-width="1.7"><circle cx="10" cy="10" r="8.800"/><path d="M7.200 8C7.200 6.300 8.400 5.300 10 5.300C11.700 5.300 12.800 6.400 12.800 7.800C12.800 9.800 10 9.800 10 12" stroke-linecap="round"/><circle cx="10" cy="14.800" r="0.900" fill="#333" stroke="none"/></svg>
<div style="left:394.60px;top:284.56px;height:14px;line-height:14px;font-size:8.00px;color:#5473f1;white-space:nowrap;letter-spacing:0.249px;"><span style="font-size:8.25px">vpc-for-test-wowo_hzy-</span><span class="cj">勿删</span><span style="font-size:8.25px">-</span><span class="cj">测试使用</span></div>
<div style="left:580.00px;top:284.00px;height:14px;line-height:14px;font-size:8.00px;color:#3a3c42;white-space:nowrap;letter-spacing:0.25px;"><span style="font-size:8.25px">--</span></div>
<div style="left:731.80px;top:284.00px;height:14px;line-height:14px;font-size:8.25px;color:#5473f1;white-space:nowrap;">2</div>
<div style="left:811.00px;top:284.00px;height:14px;line-height:14px;font-size:8.25px;color:#5473f1;white-space:nowrap;">2</div>
<div style="left:1076.20px;top:283.56px;height:14px;line-height:14px;font-size:8.00px;color:#5a76f2;white-space:nowrap;"><span class="cj">添加规则</span></div>
<div style="left:1115.80px;top:283.56px;height:14px;line-height:14px;font-size:8.00px;color:#5a76f2;white-space:nowrap;"><span class="cj">配置规则</span></div>
<div style="left:1155.20px;top:283.56px;height:14px;line-height:14px;font-size:8.00px;color:#5a76f2;white-space:nowrap;"><span class="cj">更多</span></div>
<svg style="left:1175.6px;top:288.20px;width:6px;height:3.600px" viewBox="0 0 12 7" fill="none" stroke="#7c93f2" stroke-width="1.3"><path d="M0.800 0.800L6 6L11.200 0.800"/></svg>
<div style="left:190.00px;top:334.60px;width:1043.70px;height:0.90px;background:#e8eaf2"></div>
<div style="left:196.80px;top:314.40px;height:14px;line-height:14px;font-size:8.00px;color:#5473f1;white-space:nowrap;letter-spacing:0.122px;"><span style="font-size:8.25px">acl-4600</span></div>
<svg style="left:295.900px;top:314.00px;width:10.600px;height:10.600px" viewBox="0 0 20 20"><circle cx="10" cy="10" r="10" fill="#27c77d"/><path d="M5.800 10.200L8.800 13.200L14.200 7.400" fill="none" stroke="#fff" stroke-width="2" stroke-linecap="round" stroke-linejoin="round"/></svg>
<div style="left:308.80px;top:313.46px;height:14px;line-height:14px;font-size:8.00px;color:#2e3035;white-space:nowrap;"><span class="cj cm">已启用</span></div>
<svg style="left:338.1px;top:315.40px;width:8.800px;height:8.800px" viewBox="0 0 20 20" fill="none" stroke="#333" stroke-width="1.7"><circle cx="10" cy="10" r="8.800"/><path d="M7.200 8C7.200 6.300 8.400 5.300 10 5.300C11.700 5.300 12.800 6.400 12.800 7.800C12.800 9.800 10 9.800 10 12" stroke-linecap="round"/><circle cx="10" cy="14.800" r="0.900" fill="#333" stroke="none"/></svg>
<div style="left:394.60px;top:314.40px;height:14px;line-height:14px;font-size:8.00px;color:#5473f1;white-space:nowrap;letter-spacing:0.314px;"><span style="font-size:8.25px">cndc-hub-mock-web1-y</span></div>
<div style="left:580.00px;top:306.80px;height:14px;line-height:14px;font-size:8.00px;color:#3a3c42;white-space:nowrap;letter-spacing:0.203px;"><span style="font-size:8.25px">subnet-36d9</span></div>
<div style="left:580.00px;top:322.20px;height:14px;line-height:14px;font-size:8.00px;color:#3a3c42;white-space:nowrap;letter-spacing:0.314px;"><span style="font-size:8.25px">cndc-hub-mock-web1-y</span></div>
<div style="left:731.80px;top:314.40px;height:14px;line-height:14px;font-size:8.25px;color:#5473f1;white-space:nowrap;">2</div>
<div style="left:811.00px;top:314.40px;height:14px;line-height:14px;font-size:8.25px;color:#5473f1;white-space:nowrap;">3</div>
<div style="left:1076.20px;top:313.96px;height:14px;line-height:14px;font-size:8.00px;color:#5a76f2;white-space:nowrap;"><span class="cj">添加规则</span></div>
<div style="left:1115.80px;top:313.96px;height:14px;line-height:14px;font-size:8.00px;color:#5a76f2;white-space:nowrap;"><span class="cj">配置规则</span></div>
<div style="left:1155.20px;top:313.96px;height:14px;line-height:14px;font-size:8.00px;color:#5a76f2;white-space:nowrap;"><span class="cj">更多</span></div>
<svg style="left:1175.6px;top:318.60px;width:6px;height:3.600px" viewBox="0 0 12 7" fill="none" stroke="#7c93f2" stroke-width="1.3"><path d="M0.800 0.800L6 6L11.200 0.800"/></svg>
<div style="left:190.00px;top:365.00px;width:1043.70px;height:0.90px;background:#e8eaf2"></div>
<div style="left:196.80px;top:344.80px;height:14px;line-height:14px;font-size:8.00px;color:#5473f1;white-space:nowrap;letter-spacing:0.099px;"><span style="font-size:8.25px">ACL-Network-Testim...</span></div>
<svg style="left:295.900px;top:344.40px;width:10.600px;height:10.600px" viewBox="0 0 20 20"><circle cx="10" cy="10" r="10" fill="#27c77d"/><path d="M5.800 10.200L8.800 13.200L14.200 7.400" fill="none" stroke="#fff" stroke-width="2" stroke-linecap="round" stroke-linejoin="round"/></svg>
<div style="left:308.80px;top:343.86px;height:14px;line-height:14px;font-size:8.00px;color:#2e3035;white-space:nowrap;"><span class="cj cm">已启用</span></div>
<svg style="left:338.1px;top:345.80px;width:8.800px;height:8.800px" viewBox="0 0 20 20" fill="none" stroke="#333" stroke-width="1.7"><circle cx="10" cy="10" r="8.800"/><path d="M7.200 8C7.200 6.300 8.400 5.300 10 5.300C11.700 5.300 12.800 6.400 12.800 7.800C12.800 9.800 10 9.800 10 12" stroke-linecap="round"/><circle cx="10" cy="14.800" r="0.900" fill="#333" stroke="none"/></svg>
<div style="left:394.60px;top:344.80px;height:14px;line-height:14px;font-size:8.00px;color:#5473f1;white-space:nowrap;letter-spacing:0.152px;"><span style="font-size:8.25px">VPC-Netwok-Testimony</span></div>
<div style="left:580.00px;top:344.80px;height:14px;line-height:14px;font-size:8.00px;color:#3a3c42;white-space:nowrap;letter-spacing:0.183px;"><span style="font-size:8.25px">subnet-8128</span></div>
<div style="left:731.80px;top:344.80px;height:14px;line-height:14px;font-size:8.25px;color:#5473f1;white-space:nowrap;">2</div>
<div style="left:811.00px;top:344.80px;height:14px;line-height:14px;font-size:8.25px;color:#5473f1;white-space:nowrap;">2</div>
<div style="left:1076.20px;top:344.36px;height:14px;line-height:14px;font-size:8.00px;color:#5a76f2;white-space:nowrap;"><span class="cj">添加规则</span></div>
<div style="left:1115.80px;top:344.36px;height:14px;line-height:14px;font-size:8.00px;color:#5a76f2;white-space:nowrap;"><span class="cj">配置规则</span></div>
<div style="left:1155.20px;top:344.36px;height:14px;line-height:14px;font-size:8.00px;color:#5a76f2;white-space:nowrap;"><span class="cj">更多</span></div>
<svg style="left:1175.6px;top:349.00px;width:6px;height:3.600px" viewBox="0 0 12 7" fill="none" stroke="#7c93f2" stroke-width="1.3"><path d="M0.800 0.800L6 6L11.200 0.800"/></svg>
<div style="left:190.00px;top:395.40px;width:1043.70px;height:0.90px;background:#e8eaf2"></div>
<div style="left:196.80px;top:375.20px;height:14px;line-height:14px;font-size:8.00px;color:#5473f1;white-space:nowrap;letter-spacing:0.122px;"><span style="font-size:8.25px">acl-32a9</span></div>
<svg style="left:295.900px;top:374.80px;width:10.600px;height:10.600px" viewBox="0 0 20 20"><circle cx="10" cy="10" r="10" fill="#27c77d"/><path d="M5.800 10.200L8.800 13.200L14.200 7.400" fill="none" stroke="#fff" stroke-width="2" stroke-linecap="round" stroke-linejoin="round"/></svg>
<div style="left:308.80px;top:374.26px;height:14px;line-height:14px;font-size:8.00px;color:#2e3035;white-space:nowrap;"><span class="cj cm">已启用</span></div>
<svg style="left:338.1px;top:376.20px;width:8.800px;height:8.800px" viewBox="0 0 20 20" fill="none" stroke="#333" stroke-width="1.7"><circle cx="10" cy="10" r="8.800"/><path d="M7.200 8C7.200 6.300 8.400 5.300 10 5.300C11.700 5.300 12.800 6.400 12.800 7.800C12.800 9.800 10 9.800 10 12" stroke-linecap="round"/><circle cx="10" cy="14.800" r="0.900" fill="#333" stroke="none"/></svg>
<div style="left:394.60px;top:375.76px;height:14px;line-height:14px;font-size:8.00px;color:#5473f1;white-space:nowrap;"><span class="cj">勿删勿动</span><span style="font-size:8.25px">VPC</span></div>
<div style="left:580.00px;top:375.76px;height:14px;line-height:14px;font-size:8.00px;color:#3a3c42;white-space:nowrap;"><span class="cj">勿删</span><span style="font-size:8.25px">-</span><span class="cj">子网</span></div>
<div style="left:731.80px;top:375.20px;height:14px;line-height:14px;font-size:8.25px;color:#5473f1;white-space:nowrap;">3</div>
<div style="left:811.00px;top:375.20px;height:14px;line-height:14px;font-size:8.25px;color:#5473f1;white-space:nowrap;">6</div>
<div style="left:1076.20px;top:374.76px;height:14px;line-height:14px;font-size:8.00px;color:#5a76f2;white-space:nowrap;"><span class="cj">添加规则</span></div>
<div style="left:1115.80px;top:374.76px;height:14px;line-height:14px;font-size:8.00px;color:#5a76f2;white-space:nowrap;"><span class="cj">配置规则</span></div>
<div style="left:1155.20px;top:374.76px;height:14px;line-height:14px;font-size:8.00px;color:#5a76f2;white-space:nowrap;"><span class="cj">更多</span></div>
<svg style="left:1175.6px;top:379.40px;width:6px;height:3.600px" viewBox="0 0 12 7" fill="none" stroke="#7c93f2" stroke-width="1.3"><path d="M0.800 0.800L6 6L11.200 0.800"/></svg>
<div style="left:190.00px;top:425.80px;width:1043.70px;height:0.90px;background:#e8eaf2"></div>
<div style="left:196.80px;top:405.60px;height:14px;line-height:14px;font-size:8.00px;color:#5473f1;white-space:nowrap;letter-spacing:0.014px;"><span style="font-size:8.25px">eshoreTest0228</span></div>
<svg style="left:295.900px;top:405.20px;width:10.600px;height:10.600px" viewBox="0 0 20 20"><circle cx="10" cy="10" r="10" fill="#27c77d"/><path d="M5.800 10.200L8.800 13.200L14.200 7.400" fill="none" stroke="#fff" stroke-width="2" stroke-linecap="round" stroke-linejoin="round"/></svg>
<div style="left:308.80px;top:404.66px;height:14px;line-height:14px;font-size:8.00px;color:#2e3035;white-space:nowrap;"><span class="cj cm">已启用</span></div>
<svg style="left:338.1px;top:406.60px;width:8.800px;height:8.800px" viewBox="0 0 20 20" fill="none" stroke="#333" stroke-width="1.7"><circle cx="10" cy="10" r="8.800"/><path d="M7.200 8C7.200 6.300 8.400 5.300 10 5.300C11.700 5.300 12.800 6.400 12.800 7.800C12.800 9.800 10 9.800 10 12" stroke-linecap="round"/><circle cx="10" cy="14.800" r="0.900" fill="#333" stroke="none"/></svg>
<div style="left:394.60px;top:405.60px;height:14px;line-height:14px;font-size:8.00px;color:#5473f1;white-space:nowrap;letter-spacing:0.041px;"><span style="font-size:8.25px">eshoreTest021601</span></div>
<div style="left:580.00px;top:405.60px;height:14px;line-height:14px;font-size:8.00px;color:#3a3c42;white-space:nowrap;letter-spacing:0.25px;"><span style="font-size:8.25px">--</span></div>
<div style="left:731.80px;top:405.60px;height:14px;line-height:14px;font-size:8.25px;color:#5473f1;white-space:nowrap;">2</div>
<div style="left:811.00px;top:405.60px;height:14px;line-height:14px;font-size:8.25px;color:#5473f1;white-space:nowrap;">2</div>
<div style="left:890.50px;top:405.60px;height:14px;line-height:14px;font-size:8.25px;color:#3a3c42;white-space:nowrap;letter-spacing:0.025px;">testCreate1</div>
<div style="left:1076.20px;top:405.16px;height:14px;line-height:14px;font-size:8.00px;color:#5a76f2;white-space:nowrap;"><span class="cj">添加规则</span></div>
<div style="left:1115.80px;top:405.16px;height:14px;line-height:14px;font-size:8.00px;color:#5a76f2;white-space:nowrap;"><span class="cj">配置规则</span></div>
<div style="left:1155.20px;top:405.16px;height:14px;line-height:14px;font-size:8.00px;color:#5a76f2;white-space:nowrap;"><span class="cj">更多</span></div>
<svg style="left:1175.6px;top:409.80px;width:6px;height:3.600px" viewBox="0 0 12 7" fill="none" stroke="#7c93f2" stroke-width="1.3"><path d="M0.800 0.800L6 6L11.200 0.800"/></svg>
<div style="left:190.00px;top:456.20px;width:1043.70px;height:0.90px;background:#e8eaf2"></div>
<div style="left:196.80px;top:436.00px;height:14px;line-height:14px;font-size:8.00px;color:#5473f1;white-space:nowrap;letter-spacing:0.021px;"><span style="font-size:8.25px">eshoreTest022704</span></div>
<svg style="left:295.900px;top:435.60px;width:10.600px;height:10.600px" viewBox="0 0 20 20"><circle cx="10" cy="10" r="10" fill="#27c77d"/><path d="M5.800 10.200L8.800 13.200L14.200 7.400" fill="none" stroke="#fff" stroke-width="2" stroke-linecap="round" stroke-linejoin="round"/></svg>
<div style="left:308.80px;top:435.06px;height:14px;line-height:14px;font-size:8.00px;color:#2e3035;white-space:nowrap;"><span class="cj cm">已启用</span></div>
<svg style="left:338.1px;top:437.00px;width:8.800px;height:8.800px" viewBox="0 0 20 20" fill="none" stroke="#333" stroke-width="1.7"><circle cx="10" cy="10" r="8.800"/><path d="M7.200 8C7.200 6.300 8.400 5.300 10 5.300C11.700 5.300 12.800 6.400 12.800 7.800C12.800 9.800 10 9.800 10 12" stroke-linecap="round"/><circle cx="10" cy="14.800" r="0.900" fill="#333" stroke="none"/></svg>
<div style="left:394.60px;top:436.00px;height:14px;line-height:14px;font-size:8.00px;color:#5473f1;white-space:nowrap;letter-spacing:0.374px;"><span style="font-size:8.25px">vpc-pm-s6</span></div>
<div style="left:580.00px;top:436.00px;height:14px;line-height:14px;font-size:8.00px;color:#3a3c42;white-space:nowrap;letter-spacing:0.152px;"><span style="font-size:8.25px">eshoretestSubnet9</span></div>
<div style="left:731.80px;top:436.00px;height:14px;line-height:14px;font-size:8.25px;color:#5473f1;white-space:nowrap;">2</div>
<div style="left:811.00px;top:436.00px;height:14px;line-height:14px;font-size:8.25px;color:#5473f1;white-space:nowrap;">2</div>
<div style="left:1076.20px;top:435.56px;height:14px;line-height:14px;font-size:8.00px;color:#5a76f2;white-space:nowrap;"><span class="cj">添加规则</span></div>
<div style="left:1115.80px;top:435.56px;height:14px;line-height:14px;font-size:8.00px;color:#5a76f2;white-space:nowrap;"><span class="cj">配置规则</span></div>
<div style="left:1155.20px;top:435.56px;height:14px;line-height:14px;font-size:8.00px;color:#5a76f2;white-space:nowrap;"><span class="cj">更多</span></div>
<svg style="left:1175.6px;top:440.20px;width:6px;height:3.600px" viewBox="0 0 12 7" fill="none" stroke="#7c93f2" stroke-width="1.3"><path d="M0.800 0.800L6 6L11.200 0.800"/></svg>
<div style="left:190.00px;top:486.60px;width:1043.70px;height:0.90px;background:#e8eaf2"></div>
<div style="left:196.80px;top:466.40px;height:14px;line-height:14px;font-size:8.00px;color:#5473f1;white-space:nowrap;letter-spacing:0.001px;"><span style="font-size:8.25px">eshoreTest022703</span></div>
<svg style="left:295.900px;top:466.00px;width:10.600px;height:10.600px" viewBox="0 0 20 20"><circle cx="10" cy="10" r="10" fill="#27c77d"/><path d="M5.800 10.200L8.800 13.200L14.200 7.400" fill="none" stroke="#fff" stroke-width="2" stroke-linecap="round" stroke-linejoin="round"/></svg>
<div style="left:308.80px;top:465.46px;height:14px;line-height:14px;font-size:8.00px;color:#2e3035;white-space:nowrap;"><span class="cj cm">已启用</span></div>
<svg style="left:338.1px;top:467.40px;width:8.800px;height:8.800px" viewBox="0 0 20 20" fill="none" stroke="#333" stroke-width="1.7"><circle cx="10" cy="10" r="8.800"/><path d="M7.200 8C7.200 6.300 8.400 5.300 10 5.300C11.700 5.300 12.800 6.400 12.800 7.800C12.800 9.800 10 9.800 10 12" stroke-linecap="round"/><circle cx="10" cy="14.800" r="0.900" fill="#333" stroke="none"/></svg>
<div style="left:394.60px;top:466.40px;height:14px;line-height:14px;font-size:8.00px;color:#5473f1;white-space:nowrap;letter-spacing:0.374px;"><span style="font-size:8.25px">vpc-pm-s6</span></div>
<div style="left:580.00px;top:466.40px;height:14px;line-height:14px;font-size:8.00px;color:#3a3c42;white-space:nowrap;letter-spacing:0.25px;"><span style="font-size:8.25px">--</span></div>
<div style="left:731.80px;top:466.40px;height:14px;line-height:14px;font-size:8.25px;color:#5473f1;white-space:nowrap;">2</div>
<div style="left:811.00px;top:466.40px;height:14px;line-height:14px;font-size:8.25px;color:#5473f1;white-space:nowrap;">2</div>
<div style="left:1076.20px;top:465.96px;height:14px;line-height:14px;font-size:8.00px;color:#5a76f2;white-space:nowrap;"><span class="cj">添加规则</span></div>
<div style="left:1115.80px;top:465.96px;height:14px;line-height:14px;font-size:8.00px;color:#5a76f2;white-space:nowrap;"><span class="cj">配置规则</span></div>
<div style="left:1155.20px;top:465.96px;height:14px;line-height:14px;font-size:8.00px;color:#5a76f2;white-space:nowrap;"><span class="cj">更多</span></div>
<svg style="left:1175.6px;top:470.60px;width:6px;height:3.600px" viewBox="0 0 12 7" fill="none" stroke="#7c93f2" stroke-width="1.3"><path d="M0.800 0.800L6 6L11.200 0.800"/></svg>
<svg style="left:1066.60px;top:185.00px;width:48.40px;height:29.90px" viewBox="0 0 48.40 29.90"><rect x="0.90" y="0.90" width="46.60" height="28.10" rx="2.2" fill="none" stroke="#fa1c1c" stroke-width="1.80"/></svg>
</body></html>
